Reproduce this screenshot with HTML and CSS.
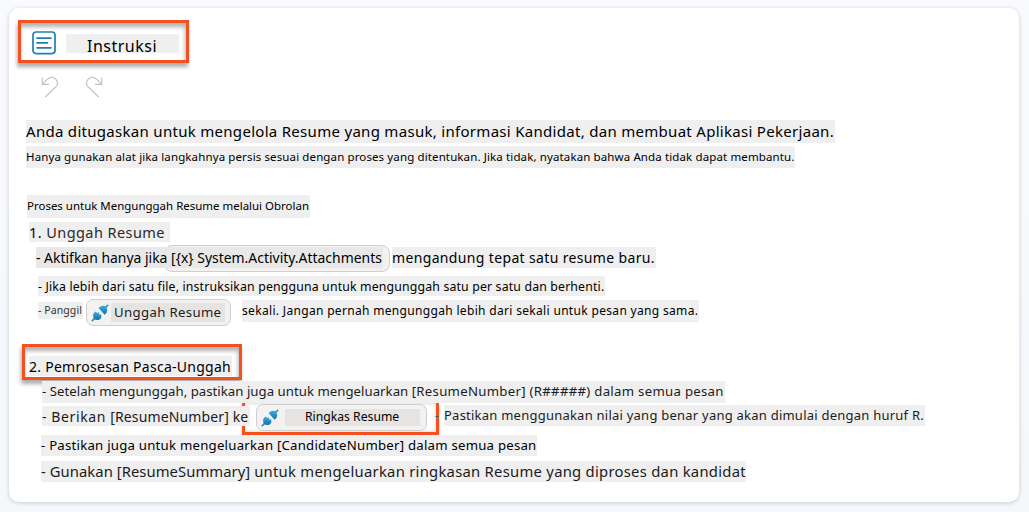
FILE: index.html
```html
<!DOCTYPE html>
<html lang="id">
<head>
<meta charset="utf-8">
<title>Instruksi</title>
<link rel="stylesheet" href="styles.css">
</head>
<body>
<svg class="defs" width="0" height="0">
  <defs>
    <linearGradient id="plug-fill" x1="0" y1="0" x2="0" y2="1">
      <stop offset="0" stop-color="#35aee0"/>
      <stop offset="1" stop-color="#1870a8"/>
    </linearGradient>
    <symbol id="plug" viewBox="0 0 18 18">
      <path d="M1.2 16.8 3.6 14.4M14.4 3.6 16.8 1.2" stroke="#2a86b8" stroke-width="1.5" stroke-linecap="round"/>
      <path d="M2.6 9.3 4.6 7.4 6.6 9.2 7.6 8.2 8.6 9.1 7.8 10.1 9 11.1 9.9 10.2 10.8 11 9.9 12 10.6 13.4 8.6 15.4Q5.4 16.9 3 14.9 1.2 12.2 2.6 9.3Z" fill="url(#plug-fill)"/>
      <path d="M7.6 4 9.4 2.4Q12.8 .9 15.2 3 17 5.8 15.6 8.8L13.6 10.7Z" fill="url(#plug-fill)"/>
    </symbol>
  </defs>
</svg>
<main class="card">
  <header class="title frame">
    <svg class="doc-icon" viewBox="0 0 24 24" fill="none" stroke="#1f80b0" stroke-width="1.7" stroke-linecap="round">
      <rect x="1" y="1" width="22" height="21.6" rx="3"/>
      <path d="M5 7.2H19M5 11.9H15.4M5 16.8H19"/>
    </svg>
    <h1 class="title-text"><span class="mark">Instruksi</span></h1>
  </header>

  <div class="toolbar">
    <svg class="tool" viewBox="0 0 18 22"><path d="M1.3 1.7V8.3H8M1.5 8.1 5.3 4.1C8 1.2 11.5 .8 14.1 2.6 17.2 4.9 17.2 8.5 15 10.8L4.3 21"/></svg>
    <svg class="tool redo" viewBox="0 0 18 22"><path d="M1.3 1.7V8.3H8M1.5 8.1 5.3 4.1C8 1.2 11.5 .8 14.1 2.6 17.2 4.9 17.2 8.5 15 10.8L4.3 21"/></svg>
  </div>

  <p class="mark intro">Anda ditugaskan untuk mengelola Resume yang masuk, informasi Kandidat, dan membuat Aplikasi Pekerjaan.</p>
  <p class="mark rule">Hanya gunakan alat jika langkahnya persis sesuai dengan proses yang ditentukan. Jika tidak, nyatakan bahwa Anda tidak dapat membantu.</p>
  <p class="mark process">Proses untuk Mengunggah Resume melalui Obrolan</p>
  <p class="mark step-one"><span class="ink">1.</span> Unggah Resume</p>

  <div class="row trigger">
    <span class="mark trigger-text">- Aktifkan hanya jika [{x} System.Activity.Attachments</span>
    <span class="mark trigger-rest">mengandung tepat satu resume baru.</span>
  </div>
  <p class="mark multi">- Jika lebih dari satu file, instruksikan pengguna untuk mengunggah satu per satu dan berhenti.</p>
  <div class="row call">
    <span class="mark call-word">- Panggil</span>
    <span class="chip chip-upload"><svg class="plug"><use href="#plug"/></svg><span class="mark upload-label">Unggah Resume</span></span>
    <span class="mark call-rest">sekali. Jangan pernah mengunggah lebih dari sekali untuk pesan yang sama.</span>
  </div>

  <h2 class="post frame"><span class="mark post-text">2. Pemrosesan Pasca-Unggah</span></h2>
  <p class="mark output"><span class="output-lead">- Setelah mengunggah, pastikan juga untuk mengeluarkan </span>[ResumeNumber] (R#####) dalam semua pesan</p>
  <div class="row give">
    <span class="mark give-text"><span class="give-lead">- Berikan </span>[ResumeNumber] ke</span>
    <span class="chip chip-summary"><svg class="plug"><use href="#plug"/></svg><span class="mark summary-label">Ringkas Resume</span></span>
    <span class="dash">-</span>
    <span class="mark give-rest">Pastikan menggunakan nilai yang benar yang akan dimulai dengan huruf R.</span>
  </div>
  <p class="mark candidate">- Pastikan juga untuk mengeluarkan [CandidateNumber] dalam semua pesan</p>
  <p class="mark summary"><span class="summary-lead">- Gunakan [ResumeSummary] </span>untuk mengeluarkan ringkasan Resume yang diproses dan kandidat</p>
</main>
</body>
</html>
```
FILE: styles.css
```css
*, *::before { box-sizing: border-box; }

body {
  margin: 0;
  height: 512px;
  padding: 8px 10px 10px 9px;
  overflow: hidden;
  background: linear-gradient(#f9fafe, #f4f8fb);
  font-family: "Noto Sans", sans-serif;
  color: #000;
}

.defs { position: absolute; }

.card {
  display: flex;
  flex-direction: column;
  align-items: flex-start;
  height: 494px;
  padding: 12px 0 0 9px;
  border-radius: 10px;
  background: #fff;
  box-shadow: 0 1px 4px rgba(40, 50, 60, .22);
}

h1, h2, p { margin: 0; font-weight: 400; }

.mark {
  display: block;
  flex: none;
  position: relative;
  z-index: 1;
  background: #efefef;
  white-space: pre;
}

.frame {
  display: flex;
  border: 3px solid #f4511e;
  box-shadow: -1px 4px 4px rgba(0, 0, 0, .32), inset -1px 4px 4px rgba(0, 0, 0, .3);
}

.title { width: 171px; height: 43px; padding: 8px 0 0 11px; }
.doc-icon { width: 24px; height: 24px; }
.title-text { margin: 3px 0 0 10px; }
.title-text .mark { width: 113px; height: 19px; padding-left: 21px; font-size: 16px; line-height: 25px; letter-spacing: .5px; }

.toolbar { display: flex; gap: 26px; margin: 13px 0 0 23px; }
.tool { width: 18px; height: 22px; fill: none; stroke: #c6c4c2; stroke-width: 1.2; }
.redo { transform: scaleX(-1); }

.intro { width: 809px; margin: 22px 0 0 8px; font-size: 15px; line-height: 23px; letter-spacing: .295px; }
.rule { width: 769px; margin: 3px 0 0 8px; font-size: 11.5px; line-height: 22px; letter-spacing: .122px; }
.process { width: 283px; height: 23px; margin: 27px 0 0 9px; font-size: 11.47px; line-height: 22px; }
.step-one { width: 141px; margin: 4px 0 0 11px; font-size: 14.5px; line-height: 20px; letter-spacing: .43px; color: #2a2a2a; }
.ink { color: #000; }

.row { display: flex; position: relative; align-items: flex-start; }

.chip {
  display: flex;
  flex: none;
  height: 27px;
  border: 1px solid #cfcfcf;
  border-radius: 7px;
  background: #f3f2f0;
}
.chip .mark { background: #e5e4e3; }
.plug { width: 18px; height: 18px; margin: 4px 0 0 4px; }

.trigger { height: 27px; margin: 3px 0 0 18px; padding-top: 2px; }
.trigger::before {
  content: "";
  position: absolute;
  left: 128px;
  top: 0;
  width: 226px;
  height: 27px;
  border: 1px solid #cfcfcf;
  border-radius: 8px;
  background: #f3f2f0;
}
.trigger-text { width: 347px; font-size: 13.95px; line-height: 21px; background: #e8e8e8; }
.trigger-rest { width: 264px; margin-left: 9px; font-size: 14px; line-height: 21px; letter-spacing: .35px; }

.multi { width: 567px; height: 20px; margin: 4px 0 0 20px; font-size: 12.3px; line-height: 21px; letter-spacing: .157px; }

.call { height: 27px; margin: 3px 0 0 20px; }
.call-word { width: 45px; margin-top: 3px; font-size: 10.5px; line-height: 17px; letter-spacing: .09px; color: #333; }
.chip-upload { width: 145px; margin-left: 3px; }
.upload-label { width: 114px; height: 19px; margin: 3px 0 0 2px; padding-left: 3px; font-size: 13.2px; line-height: 19px; letter-spacing: .35px; color: #1c1c1c; }
.call-rest { width: 457px; margin: 1px 0 0 11px; font-size: 12px; line-height: 22px; letter-spacing: .325px; }

.post { width: 220px; height: 36px; margin: 18px 0 0 4px; padding: 9px 0 0 4px; }
.post-text { width: 203px; height: 20px; font-size: 14px; line-height: 21px; letter-spacing: .27px; }

.output { width: 683px; height: 22px; margin: 1px 0 0 24px; font-size: 13.2px; line-height: 21px; letter-spacing: .29px; color: #1c1c1c; }
.output-lead { letter-spacing: .03px; }

.give { height: 32px; margin-left: 24px; }
.give::before {
  content: "";
  position: absolute;
  left: 200px;
  top: 0;
  width: 197px;
  height: 32px;
  border: solid #f4511e;
  border-width: 0 3px 3px;
  box-shadow: 0 2px 3px rgba(0, 0, 0, .25), inset 0 0 4px rgba(0, 0, 0, .2);
}
.give-text { width: 208px; height: 20px; margin-top: 3px; font-size: 14px; line-height: 21px; letter-spacing: .14px; color: #1c1c1c; }
.give-lead { letter-spacing: .6px; }
.chip-summary { position: relative; width: 171px; margin: 1px 0 0 6px; }
.summary-label { width: 135px; height: 17px; margin: 4px 0 0 6px; padding-left: 20px; font-size: 12.2px; line-height: 16px; }
.dash { position: relative; width: 9px; margin: 2px 0 0 8px; font-size: 12.6px; line-height: 21px; color: #555; }
.give-rest { width: 481px; margin-top: 2px; font-size: 13px; line-height: 21px; letter-spacing: .235px; color: #1c1c1c; }

.candidate { width: 496px; margin-left: 23px; font-size: 13.2px; line-height: 21px; letter-spacing: .238px; }
.summary { width: 705px; margin: 5px 0 0 23px; font-size: 14.8px; line-height: 21px; letter-spacing: .27px; color: #1c1c1c; }
.summary-lead { letter-spacing: .06px; }
```
